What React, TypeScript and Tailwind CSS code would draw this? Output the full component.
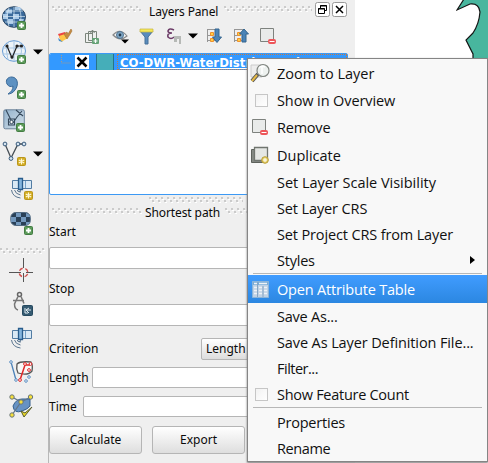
import type { ReactNode } from 'react';

function Svg({ w, h, children, className = '' }: { w: number; h: number; children: ReactNode; className?: string }) {
  return <svg width={w} height={h} viewBox={`0 0 ${w} ${h}`} className={`block shrink-0 ${className}`} fill="none">{children}</svg>;
}

const Plus = ({ x, y }: { x: number; y: number }) => (
  <g transform={`translate(${x} ${y})`}>
    <rect x=".5" y=".5" width="8" height="8" rx="1" fill="#5c9a5a" stroke="#437c43" />
    <path d="M4.5 2v5M2 4.500h5" stroke="#fff" strokeWidth="1.800" />
  </g>
);
const Star = ({ x, y }: { x: number; y: number }) => (
  <g transform={`translate(${x} ${y})`}>
    <rect x=".5" y=".5" width="8" height="8" rx="1" fill="#d3ad22" stroke="#b9951c" />
    <path d="M4.500 1.500v6M1.800 3l5.400 3M1.800 6l5.400-3" stroke="#fff8d8" strokeWidth="1.200" />
  </g>
);

const Globe = () => (
  <Svg w={26} h={26}>
    <ellipse cx="12" cy="11" rx="11.500" ry="10.300" fill="#3a6a9c" stroke="#2d4a68" />
    <path d="M5 3.500h5v4H3zM13 1h5l2 3h-7zM1 8h5v5H1zM11 8h6v5h-6zM6 13h5v5H6zM17 13h5l-2 5h-3z" fill="#a8c9e8" />
    <path d="M3 5h18M1 10.500h22M3 16h18M12 1v20M7 2q-4 9 0 18M17 2q4 9 0 18" stroke="#d6e5f1" strokeWidth=".7" />
    <Plus x={15} y={15} />
  </Svg>
);
const GlobeV = () => (
  <Svg w={26} h={26}>
    <ellipse cx="12" cy="11" rx="11.500" ry="10.300" fill="#edf3f8" stroke="#659bd5" />
    <path d="M1 8h22M1 14h22M12 1v20M6 2q-3 9 0 18M18 2q3 9 0 18" stroke="#a9c7e4" />
    <path d="M5 6l5 12 5-12h4" stroke="#222" strokeWidth="1.200" />
    <circle cx="5" cy="6" r="1.600" fill="#222" /><circle cx="10" cy="17" r="1.600" fill="#222" /><circle cx="15" cy="6" r="1.600" fill="#222" /><circle cx="19.500" cy="6" r="1.600" fill="#222" />
    <Plus x={15} y={15} />
  </Svg>
);
const Comma = () => (
  <Svg w={26} h={24}>
    <path d="M4 8C2 4 5 .8 9 1c6 .5 7 8 3 13-2 3-5 4-7 4 3-2 5-4 5-8-2 1.300-4.500.5-6-2z" fill="#5d91c2" stroke="#3c6b99" />
    <Plus x={14} y={14} />
  </Svg>
);
const VirtualLayer = () => (
  <Svg w={26} h={24}>
    <defs><linearGradient id="vg" x2="1" y2="1"><stop stopColor="#94b3cd" /><stop offset="1" stopColor="#d2dfe9" /></linearGradient></defs>
    <rect x=".8" y=".8" width="20.500" height="19" rx="1.500" fill="url(#vg)" stroke="#6b8299" />
    <path d="M3 1l5 10M19 2l-5 6-4 6M13 1l7 6M5.500 10v6h6v-6z" stroke="#34475a" strokeWidth="1.100" />
    <circle cx="8.500" cy="13" r="1.700" fill="#fff" stroke="#34475a" />
    <Plus x={13} y={14} />
  </Svg>
);
const VectorNew = () => (
  <Svg w={26} h={26}>
    <path d="M3 4l6 14 7-14h6" stroke="#454d54" strokeWidth="1.300" />
    {[[3, 4], [9, 18.5], [16, 4], [22, 4]].map(([x, y]) => <circle key={x} cx={x} cy={y} r="1.900" fill="#d6e4f0" stroke="#385a7b" />)}
    <Star x={15} y={17} />
  </Svg>
);
const Satellite = ({ star }: { star?: boolean }) => (
  <Svg w={24} h={24}>
    <path d="M2.500 4.500h19v8h-19z" fill="#d9e9f5" stroke="#527ca3" />
    <path d="M15.500 5v7" stroke="#79a5cb" />
    <path d="M8.500 2.500v11h4v-11z" fill="#84b5dd" stroke="#285c8c" strokeWidth="1.300" />
    <path d="M10.500 14q0 3-3 1M1.500 14q1 7 9 8M4.500 14q1 4 6 5M7 14q1 2 4 2" stroke="#5b7690" />
    {star && <Star x={14} y={15} />}
  </Svg>
);
const Checker = () => (
  <Svg w={26} h={24}>
    <rect x=".8" y="1.500" width="19.500" height="13" rx="5" fill="#294057" stroke="#526b83" />
    <path d="M6 2h5v4H6zM16 2q4 1 4 4h-4zM1 6h5v5H1zM11 6h5v5h-5zM6 11h5v3H6zM16 11h4q-1 3-4 3z" fill="#7398bd" />
    <Plus x={14} y={15} />
  </Svg>
);
const Cross = () => (
  <Svg w={24} h={24}>
    <path d="M14.500 0v10M14.500 15v9M0 14.500h12M17 14.500h7" stroke="#555" />
    <circle cx="14.500" cy="14.500" r="4.300" stroke="#cf4d4b" strokeWidth="1.400" strokeDasharray="4 2.750" strokeDashoffset="-1.400" />
  </Svg>
);
const Compass = () => (
  <Svg w={24} h={25}>
    <circle cx="7.500" cy="3.500" r="2" stroke="#666" strokeWidth="1.500" />
    <path d="M6 5.500L2.500 13q0 5 3.500 6M9 5.500l3 7M1 9.500h11" stroke="#777" strokeWidth="1.500" />
    <rect x="10.500" y="14.500" width="10" height="10" rx="1" fill="#365b72" stroke="#25495f" />
    <path d="M13 17v5h3M19 19h-5l3-2M14 19l3 3" stroke="#e1edf2" />
  </Svg>
);
const Split = () => (
  <Svg w={25} h={23}>
    <path d="M8 4q3-3 14-2 2 3 1 9-4 5-14 2-2-4-1-9z" fill="#f8f8f6" stroke="#555" strokeWidth="1.300" />
    <path d="M2 2l5 18" stroke="#4c82b8" strokeWidth="1.300" /><path d="M11 20l5-15h5" stroke="#e12828" strokeWidth="1.500" />
    <g fill="#fff" stroke="#5b8ec2"><circle cx="2" cy="2" r="1.300" /><circle cx="7" cy="20" r="1.300" /><circle cx="20" cy="17" r="1.300" /><circle cx="17" cy="21" r="1.300" /></g>
    <g fill="#fff" stroke="#e12828"><circle cx="11" cy="20" r="1.400" /><circle cx="16" cy="4" r="1.400" /><circle cx="21.500" cy="4" r="1.400" /><circle cx="20" cy="10" r="1.400" /></g>
  </Svg>
);
const Topology = () => (
  <Svg w={26} h={25}>
    <path d="M4 12q3-7 9-7h8v7q-2 3-8 5-8 3-9-5z" fill="#6692c4" stroke="#355f8c" />
    <path d="M3 3l9 5-9 13M12 8l10-5" stroke="#617588" strokeWidth="1.300" />
    <path d="M12 17l4 2 7-6-8 10z" fill="#f0dd24" stroke="#555a30" />
    {[[3, 3], [21.5, 3], [12, 8], [3, 21]].map(([x, y]) => <circle key={`${x}-${y}`} cx={x} cy={y} r="2.200" fill="#f5df3b" stroke="#68757a" />)}
  </Svg>
);
const Down = () => <Svg w={10} h={6}><path d="M0 .5h10L5 5.500z" fill="#000" /></Svg>;

function Grip({ width }: { width: number }) {
  return <Svg w={width} h={6}>
    <path d={`M0 1h${width}`} stroke="#cbcbcb" strokeWidth="2" strokeDasharray="2 4" />
    <path d={`M3 4h${width - 3}`} stroke="#cbcbcb" strokeWidth="2" strokeDasharray="2 4" />
    <path d={`M1 2.500h${width - 1}`} stroke="#fff" strokeDasharray="2 4" />
    <path d={`M4 5.500h${width - 4}`} stroke="#fff" strokeDasharray="2 4" />
  </Svg>;
}
const SheetMinus = () => <Svg w={20} h={20}>
  <path d="M2.500 2.500h13v13h-13z" fill="#e9ebea" stroke="#7e827e" /><rect x="10" y="13" width="8" height="5" rx="2" fill="#ed5559" /><path d="M11.500 15.500h5" stroke="#fff" />
</Svg>;
const Arrange = ({ up }: { up?: boolean }) => <Svg w={17} h={17}>
  <path d="M1.500 1v13M2 1.500h8M2 12.500h8M2 7.500h4" stroke="#969696" /><path d="M4.500 4.500h3v3h-3zM4.500 10.500h3v3h-3z" fill="#ffcf45" stroke="#ee902e" />
  <path d={up ? 'M9 14V6H6.500L11 1l4.500 5H13v8z' : 'M9 1v8H6.500l4.500 5.500L15.500 9H13V1z'} fill="#4a83b7" stroke="#34658e" />
</Svg>;

function Toolbar() {
  return <div className="flex h-[463px] w-12 shrink-0 flex-col overflow-hidden">
    <div className="flex flex-col pl-[2px] pt-[6px]">
      <div className="h-[34px]"><Globe /></div>
      <div className="flex h-[36px]"><GlobeV /><div className="pl-[5px] pt-[9px]"><Down /></div></div>
      <div className="h-[33px] pl-[1px]"><Comma /></div>
      <div className="h-[31px] pl-[1px]"><VirtualLayer /></div>
      <div className="flex h-[36px]"><VectorNew /><div className="pl-[5px] pt-[11px]"><Down /></div></div>
    </div>
    <div className="h-[35px] pl-[10px]"><Satellite star /></div>
    <div className="h-[37px] pl-[10px]"><Checker /></div>
    <div className="h-[10px]"><Grip width={45} /></div>
    <div className="h-[33px] pl-[9px]"><Cross /></div>
    <div className="h-[35px] pl-[12px]"><Compass /></div>
    <div className="h-[34px] pl-[10px]"><Satellite /></div>
    <div className="h-[34px] pl-[9px]"><Split /></div>
    <div className="pl-[9px]"><Topology /></div>
  </div>;
}

function PanelTools() {
  return <div className="flex h-[27px] items-center pl-[8px] pt-[1px]">
    <Svg w={16} h={16}><path d="M1 6l7-2 3 5-7 4z" fill="#ed4444" /><path d="M2 8l6-2 3 4-7 4z" fill="#ffc647" /><path d="M1 10l5 4-4-1z" fill="#438bc8" /><path d="M7 6l3-2 1 2 3-5 1 2-3 5-2 3z" fill="#c58b42" stroke="#a57232" strokeWidth=".6" /></Svg>
    <Svg w={17} h={17} className="ml-[11px]"><path d="M1.500 5.500h7v9h-7zM4.500 3.500h8v9h-8z" fill="#eef0ee" stroke="#7a847b" /><path d="M8.500 12V2m-2 3l2-3 2 3" stroke="#7a847b" /><rect x="8" y="10" width="7" height="6" rx="1" fill="#65a276" /><path d="M11.500 11v4M9.500 13h4" stroke="#fff" strokeWidth="1.200" /></Svg>
    <Svg w={18} h={17} className="ml-[11px]"><path d="M1 7q7-8 14 1-7 6-14-1z" fill="#f5f7f8" stroke="#888" strokeWidth="1.200" /><circle cx="8" cy="7" r="3.500" fill="#82aac8" stroke="#507391" /><circle cx="8" cy="7" r="1.400" fill="#26394b" /><path d="M9 11.500h8l-4 4z" fill="#000" /></Svg>
    <Svg w={15} h={17} className="ml-[9px]"><path d="M1 3h13L9 9v7H6V9z" fill="#598cbd" stroke="#467099" /><path d="M1 1h13v3H1z" fill="#f4e95a" stroke="#c7b63c" strokeWidth=".7" /></Svg>
    <Svg w={18} h={17} className="ml-[12px]"><path d="M8 2Q3-.5 2 3q0 2 4 2-5 0-4 4 3 3 6 0" stroke="#6c3c68" strokeWidth="1.600" /><path d="M8 8h7v8h-2v-5h-2v3H8z" fill="#b6b9b6" /></Svg>
    <div className="ml-[4px]"><Down /></div><div className="w-[8px]" />
    <Arrange /><div className="w-[10px]" /><Arrange up />
    <div className="pl-[8px]"><SheetMinus /></div>
  </div>;
}

const Field = ({ label, left }: { label: string; left: string }) => <div className="flex h-[29px] items-center">
  <span className={`${left} shrink-0`}>{label}</span><div className="h-[21px] flex-1 rounded-[2px] border border-[#b5b5b5] bg-white" />
</div>;

function Panel() {
  return <div className="flex h-[463px] w-[307px] shrink-0 flex-col border-l border-[#b8b8b8] bg-[#efefef] text-[12px] leading-[16px] text-[#0a0a0a]">
    <div className="flex h-[22px] items-center pl-[3px]">
      <div className="pb-[4px]"><Grip width={90} /></div><span className="ml-[7px] w-[75px] pt-[1px] tracking-[-0.15px]">Layers Panel</span><div className="pb-[4px]"><Grip width={88} /></div>
      <div className="ml-[3px] flex gap-[2px] pb-[3px]">
        <Svg w={15} h={15}><rect x=".5" y=".5" width="14" height="14" rx="2" fill="#fff" stroke="#999" /><path d="M5.500 6V3.500h6v5H9M3.500 6.500h6v5h-6zM5 4h7M3 7h7" stroke="#000" /></Svg>
        <Svg w={15} h={15}><rect x=".5" y=".5" width="14" height="14" rx="2" fill="#fff" stroke="#999" /><path d="M4 4l7 7m0-7l-7 7" stroke="#000" strokeWidth="1.500" /></Svg>
      </div>
    </div>
    <PanelTools />
    <div className="mt-[4px] h-[142px] w-[299px] overflow-hidden rounded-[2px] border border-[#3c99f4] bg-white">
      <div className="flex h-[16px] bg-[#3399ff]">
        <Svg w={25} h={16}><path d="M11.500 1v8h9" stroke="#a89b87" strokeDasharray="1 1" /></Svg>
        <Svg w={14} h={15}><path d="M0 1h14v14H0z" fill="#fff" /><path d="M2.500 3.500l9 9m0-9l-9 9" stroke="#000" strokeWidth="2.500" /></Svg>
        <div className="ml-[7px] w-[18px] border-x border-[#297487] bg-[#45aeb9]" />
        <div className="ml-[3px] flex-1 overflow-hidden whitespace-nowrap border border-dotted border-[#c9793c] pl-[2px] font-['DejaVu_Sans_Condensed','DejaVu_Sans'] text-[13px] font-bold leading-[15px] text-white underline [font-stretch:condensed]">CO-DWR-WaterDistricts-polygon</div>
      </div>
    </div>
    <div className="flex h-[9px] items-center pl-[100px]"><Grip width={94} /></div>
    <div className="flex h-[18px] items-center pl-[3px]"><div className="pb-[4px]"><Grip width={90} /></div><span className="ml-[3px] w-[80px] tracking-[-0.1px]">Shortest path</span><div className="pb-[4px]"><Grip width={110} /></div></div>
    <div className="h-[25px] pt-[2px]">Start</div>
    <div className="h-[22px] rounded-[2px] border border-[#b5b5b5] bg-white" />
    <div className="h-[35px] pt-[12px]">Stop</div>
    <div className="h-[22px] rounded-[2px] border border-[#b5b5b5] bg-white" />
    <div className="flex h-[34px] items-end"><span className="w-[152px] pb-[3px]">Criterion</span><div className="h-[22px] w-[110px] rounded-[2px] border border-[#b5b5b5] bg-linear-to-b from-white to-[#ddd] pl-[4px] leading-[20px]">Length</div></div>
    <div className="pt-[3px]"><Field label="Length" left="w-[43px]" /><Field label="Time" left="w-[34px]" /></div>
    <div className="flex gap-[10px] pt-[5px]">
      <button className="h-[28px] w-[93px] rounded-[3px] border border-[#b5b5b5] bg-linear-to-b from-white to-[#dedede]">Calculate</button>
      <button className="h-[28px] w-[93px] rounded-[3px] border border-[#b5b5b5] bg-linear-to-b from-white to-[#dedede]">Export</button>
    </div>
  </div>;
}

const ZoomIcon = () => <Svg w={20} h={20}><path d="M1 2h11v12H1z" fill="#ededed" stroke="#ccc" /><path d="M2 18l6-7" stroke="#555" strokeWidth="4" /><path d="M2 18l5-6" stroke="#e4b947" strokeWidth="2" /><circle cx="13" cy="7.500" r="6" fill="#ebefed" fillOpacity=".9" stroke="#808580" strokeWidth="1.200" /><path d="M9 5q2-3 6-1M12 3v8" stroke="#fff" strokeWidth="1.500" /></Svg>;
const DupIcon = () => <Svg w={20} h={20}><path d="M1.500 4.500h13v13h-13z" fill="#858984" stroke="#5d625c" /><path d="M4.500 2.500h13v13h-13z" fill="#e5e7e4" stroke="#70756f" strokeWidth="1.300" /><circle cx="15" cy="15" r="3.300" fill="#e5d06c" stroke="#ba9e36" /><path d="M15 13v4M13 15h4" stroke="#fff" /></Svg>;
const TableIcon = () => <Svg w={17} h={17}><path d="M.5.500h16v16H.5z" fill="#c0d2e5" stroke="#8cb4d8" /><path d="M1 1h15v3H1z" fill="#79acd8" /><path d="M2 2.500h3M7 2.500h8M2 6.500h3M7 6.500h3M12 6.500h3M2 9.500h3M7 9.500h3M12 9.500h3M2 12.500h3M7 12.500h3M12 12.500h3" stroke="#eef2f7" strokeWidth="1.500" /><path d="M5.500 1v15M11 5v11" stroke="#87a6c4" /></Svg>;
const Check = () => <div className="ml-[5px] size-[13px] border border-[#c6c6c6] bg-linear-to-br from-[#f2f2f2] to-white" />;

function Item({ label, icon, tall, selected, arrow, track = 'tracking-[-0.22px]' }: { label: string; icon?: ReactNode; tall?: boolean; selected?: boolean; arrow?: boolean; track?: string }) {
  return <div className={`flex shrink-0 items-center ${tall ? 'h-[28px]' : 'h-[26px]'} ${selected ? 'bg-linear-to-b from-[#409cff] to-[#2b87e1] text-white' : ''}`}>
    <div className="w-[29px] shrink-0 pl-[2px]">{icon}</div><span className={`whitespace-nowrap pt-[2px] ${track}`}>{label}</span>
    {arrow && <Svg w={5} h={8} className="ml-auto mr-[12px]"><path d="M0 0v8l5-4z" fill="#000" /></Svg>}
  </div>;
}

function Menu() {
  return <div className="absolute left-[247px] top-[58px] flex h-[404px] w-[241px] flex-col border border-[#858585] bg-[#f8f8f8] font-['Open_Sans'] text-[14.5px] leading-[24px] text-[#111] shadow-[0_1px_2px_#777]">
    <Item tall icon={<ZoomIcon />} label="Zoom to Layer" track="tracking-[-0.02px]" />
    <Item icon={<Check />} label="Show in Overview" track="tracking-[-0.1px]" />
    <Item tall icon={<SheetMinus />} label="Remove" />
    <Item tall icon={<DupIcon />} label="Duplicate" track="tracking-[0px]" />
    <Item label="Set Layer Scale Visibility" track="tracking-[-0.02px]" />
    <Item label="Set Layer CRS" track="tracking-[-0.12px]" />
    <Item label="Set Project CRS from Layer" track="tracking-[-0.14px]" />
    <Item label="Styles" arrow />
    <div className="mx-[5px] h-[2px] shrink-0 border-t border-[#b7b7b7]" />
    <Item tall selected icon={<div className="pl-[2px]"><TableIcon /></div>} label="Open Attribute Table" track="tracking-[-0.18px]" />
    <Item label="Save As..." />
    <Item label="Save As Layer Definition File..." track="tracking-[-0.11px]" />
    <Item label="Filter..." track="tracking-[-0.5px]" />
    <Item icon={<Check />} label="Show Feature Count" track="tracking-[-0.28px]" />
    <div className="mx-[5px] h-[2px] shrink-0 border-t border-[#b7b7b7]" />
    <Item label="Properties" />
    <Item label="Rename" track="tracking-[-0.4px]" />
  </div>;
}

export default function App() {
  return <main className="relative flex h-[463px] w-[488px] overflow-hidden bg-[#efefef] font-['Noto_Sans',sans-serif]">
    <Toolbar />
    <Panel />
    <div className="flex flex-1 justify-end bg-white">
      <Svg w={32} h={60}><path d="M8-1L1 10l13-6q9-1 10 8-1 12-7 21l-7 7 7 14v7h17V-1z" fill="#48b69e" stroke="#151515" strokeWidth="1.200" /></Svg>
    </div>
    <Menu />
  </main>;
}
